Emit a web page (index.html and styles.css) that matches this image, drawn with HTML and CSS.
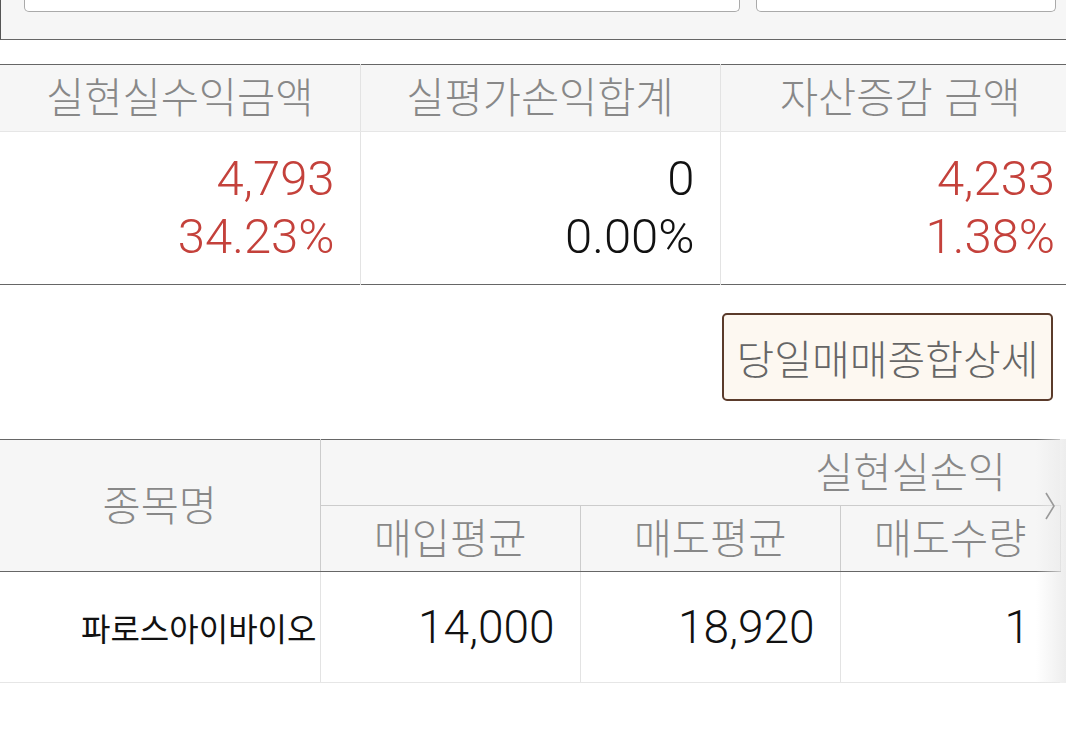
FILE: index.html
```html
<!DOCTYPE html>
<html lang="ko">
<head>
    <meta charset="UTF-8">
    <meta name="viewport" content="width=device-width, initial-scale=1.0">
    <title>당일매매 실현손익</title>
    <link rel="stylesheet" href="styles.css">
</head>
<body>

<div class="search-panel">
    <div class="search-box wide"></div>
    <div class="search-box narrow"></div>
</div>

<div class="summary-wrap">
    <table class="summary">
        <thead>
            <tr>
                <th>실현실수익금액</th>
                <th>실평가손익합계</th>
                <th>자산증감 금액</th>
            </tr>
        </thead>
        <tbody>
            <tr>
                <td class="up">
                    <div>4,793</div>
                    <div>34.23%</div>
                </td>
                <td>
                    <div>0</div>
                    <div>0.00%</div>
                </td>
                <td class="up">
                    <div>4,233</div>
                    <div>1.38%</div>
                </td>
            </tr>
        </tbody>
    </table>
</div>

<div class="action-bar">
    <button class="detail-btn">당일매매종합상세</button>
</div>

<div class="trade-wrap">
    <table class="trades">
        <colgroup>
            <col class="col-name">
            <col class="col-num">
            <col class="col-num">
            <col class="col-qty">
        </colgroup>
        <thead>
            <tr>
                <th rowspan="2" class="name-head">종목명</th>
                <th colspan="3" class="group-head">실현실손익</th>
            </tr>
            <tr>
                <th>매입평균</th>
                <th>매도평균</th>
                <th>매도수량</th>
            </tr>
        </thead>
        <tbody>
            <tr>
                <td class="stock-name">파로스아이바이오</td>
                <td>14,000</td>
                <td>18,920</td>
                <td>1</td>
            </tr>
        </tbody>
    </table>
    <div class="scroll-shade"></div>
    <svg class="scroll-arrow" width="12" height="30" viewBox="0 0 12 30">
        <path d="M2 2 L10 15 L2 28" fill="none" stroke="#999" stroke-width="1.6"/>
    </svg>
</div>

</body>
</html>
```

FILE: styles.css
```css
html, body {
    margin: 0;
    padding: 0;
    overflow: hidden;
    background-color: #fff;
    font-family: "Noto Sans CJK KR", "Noto Sans", sans-serif;
    color: #111;
}
.search-panel {
    display: flex;
    align-items: flex-start;
    gap: 16px;
    height: 39px;
    padding-left: 23px;
    background-color: #f6f6f6;
    border-left: 1px solid #555;
    border-bottom: 1px solid #666;
}
.search-box {
    height: 11px;
    background-color: #fff;
    border: 1px solid #aaa;
    border-top: none;
    border-radius: 0 0 5px 5px;
}
.search-box.wide {
    width: 714px;
}
.search-box.narrow {
    width: 298px;
}
.summary-wrap {
    margin-top: 24px;
    overflow: hidden;
}
.summary {
    width: 1080px;
    table-layout: fixed;
    border-collapse: collapse;
    border-top: 1px solid #666;
    border-bottom: 1px solid #666;
}
.summary th {
    height: 60px;
    padding: 0 0 6px;
    background-color: #f6f6f6;
    color: #888;
    font-size: 41.5px;
    font-weight: 300;
    border-bottom: 1px solid #e6e6e6;
    border-left: 1px solid #e3e3e3;
}
.summary td {
    height: 152px;
    padding: 0 25px 0 0;
    text-align: right;
    font-family: Roboto, "Noto Sans CJK KR", sans-serif;
    font-size: 49px;
    font-weight: 300;
    line-height: 58px;
    border-left: 1px solid #e3e3e3;
}
.summary th:first-child, .summary td:first-child {
    border-left: none;
}
.summary td.up {
    color: #c4413b;
}
.action-bar {
    display: flex;
    justify-content: flex-end;
    padding: 28px 13px 38px 0;
}
.detail-btn {
    width: 331px;
    height: 88px;
    padding: 0;
    background-color: #fdf8f1;
    border: 2px solid #5b3b2b;
    border-radius: 5px;
    color: #666;
    font-family: inherit;
    font-size: 41px;
    font-weight: 300;
}
.trade-wrap {
    position: relative;
    overflow: hidden;
}
.trades {
    width: 1060px;
    table-layout: fixed;
    border-collapse: collapse;
    border-top: 1px solid #666;
}
.col-name {
    width: 320px;
}
.col-num {
    width: 260px;
}
.col-qty {
    width: 220px;
}
.trades th {
    height: 60px;
    padding: 0 0 5px;
    background-color: #f6f6f6;
    color: #888;
    font-size: 41.5px;
    font-weight: 300;
    border-left: 1px solid #ccc;
    border-bottom: 1px solid #ccc;
    border-right: 1px solid #ccc;
}
.trades th.name-head {
    border-left: none;
    border-bottom: 1px solid #666;
}
.trades th.group-head {
    text-align: right;
    padding-right: 54px;
    border-right: none;
}
.trades thead tr:last-child th {
    border-bottom: 1px solid #666;
}
.trades td {
    height: 110px;
    padding: 0 25px 0 0;
    text-align: right;
    font-family: Roboto, "Noto Sans CJK KR", sans-serif;
    font-size: 46px;
    font-weight: 300;
    border-left: 1px solid #e3e3e3;
    border-bottom: 1px solid #e6e6e6;
}
.trades td.stock-name {
    padding-right: 3px;
    font-family: "Noto Sans CJK KR", sans-serif;
    font-size: 32px;
    font-weight: normal;
    border-left: none;
}
.trades td:last-child {
    padding-right: 30px;
}
.scroll-shade {
    position: absolute;
    top: 0;
    right: 0;
    width: 30px;
    height: 244px;
    background: linear-gradient(to right, rgba(235, 235, 235, 0), rgba(235, 235, 235, 0.9));
}
.scroll-arrow {
    position: absolute;
    top: 52px;
    right: 10px;
}
```
